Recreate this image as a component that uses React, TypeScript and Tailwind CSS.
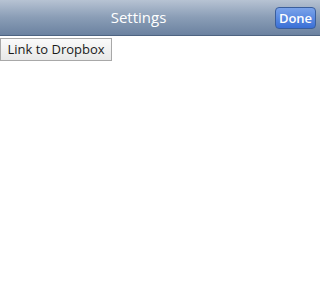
import React from 'react';

export default function App() {
  return (
    <div className="w-[320px] h-[295px] bg-white font-['Open_Sans',sans-serif]">
      {/* Header */}
      <div className="relative h-[36px] flex items-center justify-center bg-gradient-to-b from-[#b7c3d3] via-[#8a9db6] to-[#6b82a0] border-b border-[#4d6381]">
        <span className="text-white text-[15px] -ml-[43px]">Settings</span>
        <button className="absolute right-[4px] top-[7px] h-[22px] w-[41px] rounded-[4px] border border-[#3a5e9c] bg-gradient-to-b from-[#7aa3ea] to-[#3a6fd6] text-white text-[13px] font-semibold leading-none">
          Done
        </button>
      </div>

      {/* Body */}
      <button className="h-[23px] w-[112px] bg-gradient-to-b from-[#fafafa] to-[#e8e8e8] border border-[#a8a8a8] text-[#1a1a1a] text-[13px] leading-none">
        Link to Dropbox
      </button>
    </div>
  );
}
